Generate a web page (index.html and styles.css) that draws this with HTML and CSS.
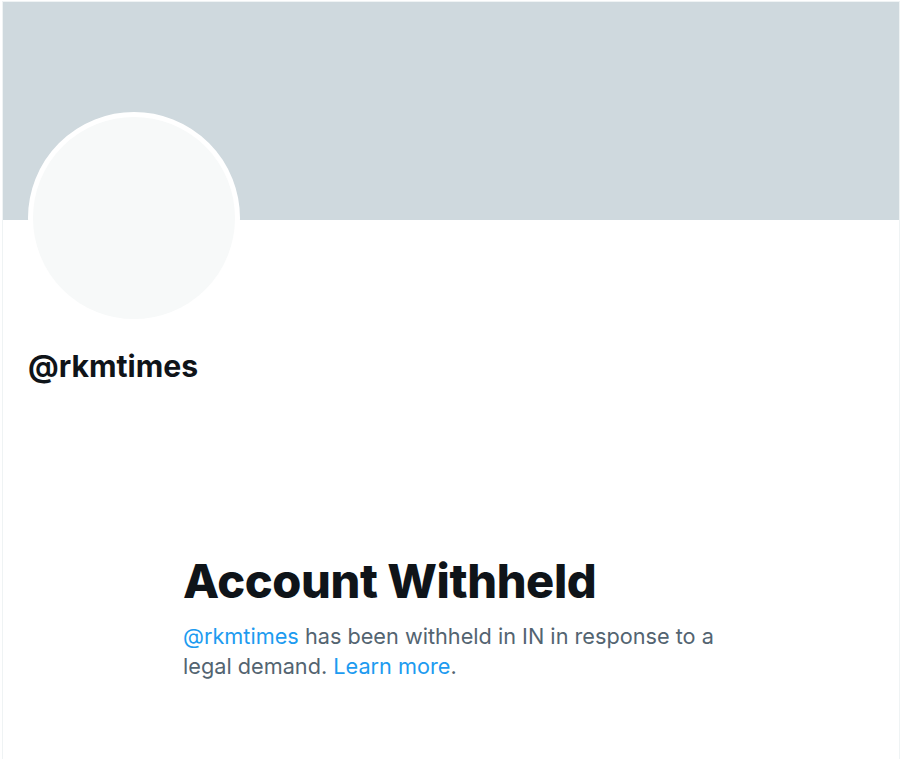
FILE: index.html
```html
<!DOCTYPE html>
<html lang="en">
<head>
<meta charset="utf-8">
<title>@rkmtimes</title>
<link rel="stylesheet" href="styles.css">
</head>
<body>
<main class="column">
  <div class="banner"></div>
  <div class="profile-head">
    <div class="avatar"></div>
  </div>
  <div class="names">
    <h2 class="handle">@rkmtimes</h2>
  </div>
  <section class="notice">
    <h1 class="notice-title">Account Withheld</h1>
    <p class="notice-text"><a href="#" class="link">@rkmtimes</a> has been withheld in IN in response to a legal demand. <a href="#" class="link">Learn more</a>.</p>
  </section>
</main>
</body>
</html>
```

FILE: styles.css
```css
html, body {
  margin: 0;
  padding: 0;
  background: #ffffff;
}
body {
  font-family: "Inter", "Liberation Sans", sans-serif;
  color: #0f1419;
}
.column {
  margin: 1px 2px 0 2px;
  width: 898px;
  min-height: 758px;
  border-left: 1px solid #eff3f4;
  border-right: 1px solid #eff3f4;
  border-top: 1px solid #eff3f4;
  box-sizing: border-box;
}
.banner {
  height: 218px;
  background: #cfd9de;
}
.profile-head {
  display: flex;
  padding: 0 0 0 25px;
  height: 107px;
}
.avatar {
  margin-top: -108px;
  width: 202px;
  height: 202px;
  flex: none;
  border-radius: 50%;
  border: 5px solid #ffffff;
  background: #f7f9f9;
}
.names {
  padding: 0 0 0 25px;
}
.handle {
  margin: 22px 0 0 0;
  font-size: 30.2px;
  line-height: 34px;
  font-weight: 700;
  letter-spacing: 0;
}
.notice {
  margin: 170px 0 0 180px;
  width: 560px;
}
.notice-title {
  margin: 0;
  font-size: 47px;
  line-height: 56px;
  font-weight: 800;
  letter-spacing: -0.42px;
}
.notice-text {
  margin: 12px 0 0 0;
  font-size: 21.7px;
  line-height: 30px;
  color: #536471;
}
.link {
  color: #1d9bf0;
  text-decoration: none;
}
```
